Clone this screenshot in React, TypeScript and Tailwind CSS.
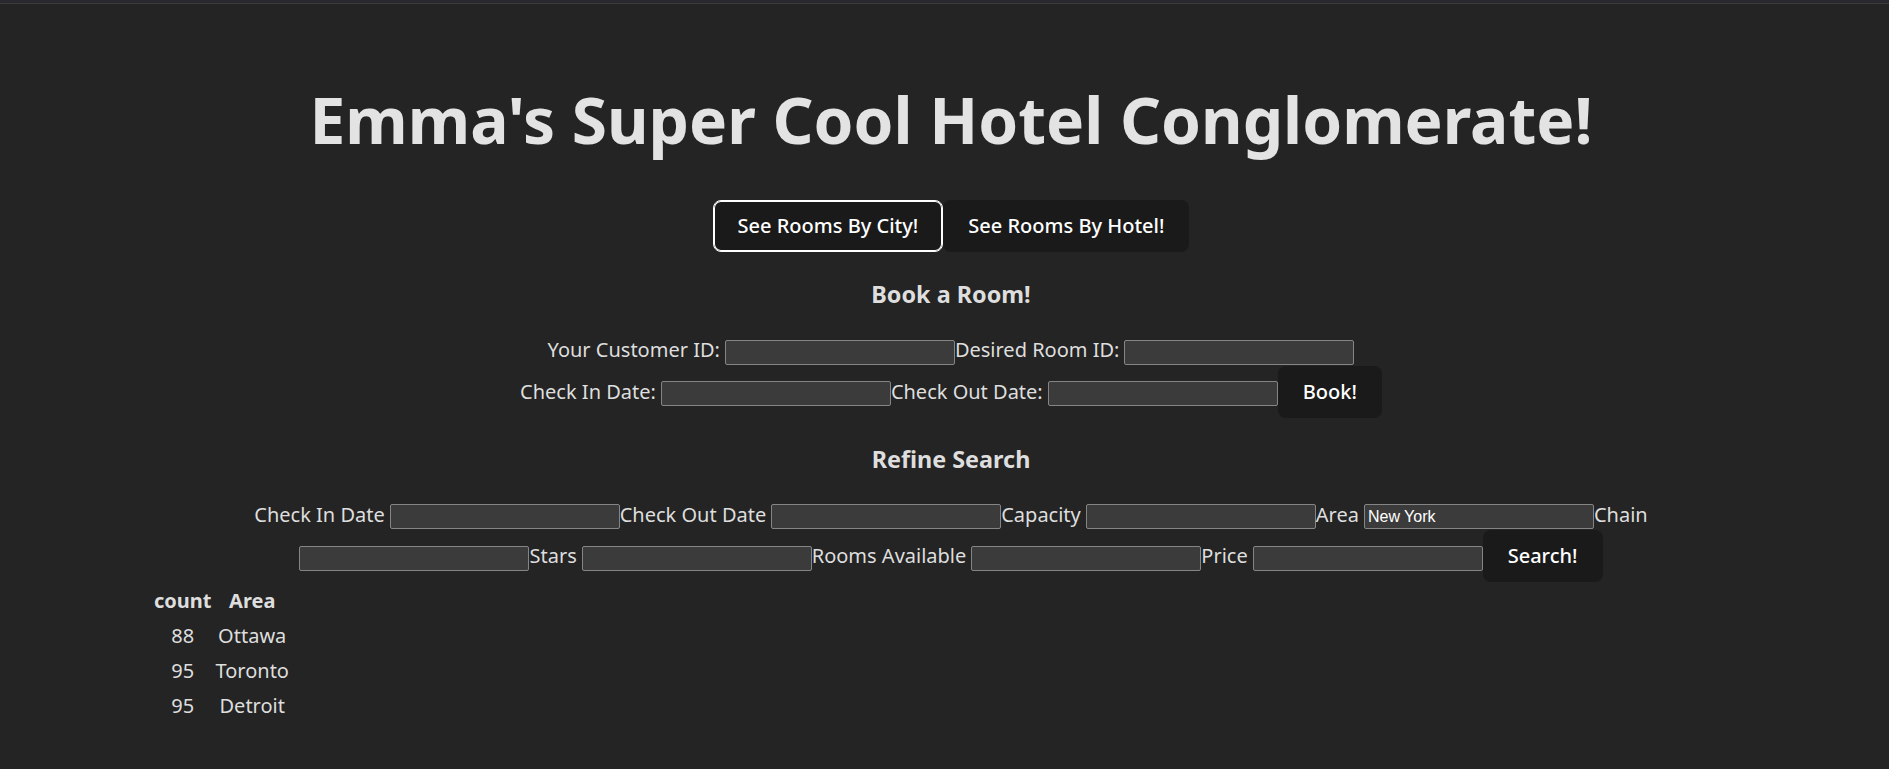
import { ReactNode } from 'react';

const inputClass = 'h-[25px] w-[230px] rounded-[2px] border border-[#858585] bg-[#3b3b3b] px-[3px] font-["Liberation_Sans",Arial,sans-serif] text-[16px] text-white outline-none';

function Field({ label, value }: { label: string; value?: string }) {
  return (
    <label className="flex items-baseline">
      <span>{label}</span>
      <input className={`ml-[5px] ${inputClass}`} defaultValue={value} />
    </label>
  );
}

function ActionButton({ children, focused }: { children: ReactNode; focused?: boolean }) {
  return (
    <button
      type="button"
      className={`rounded-lg border bg-[#1a1a1a] px-[24px] py-[10px] text-[20px] font-medium leading-[30px] text-white ${focused ? 'border-white shadow-[inset_0_0_0_1px_#fff]' : 'border-transparent'}`}
    >
      {children}
    </button>
  );
}

const rows = [
  { count: 88, area: 'Ottawa' },
  { count: 95, area: 'Toronto' },
  { count: 95, area: 'Detroit' },
];

export default function App() {
  return (
    <div className="min-h-screen bg-[#242424] font-['Noto_Sans',sans-serif] text-[20px] text-[#dedede]">
      <div className="h-[3px] bg-[#28282e]" />
      <div className="h-px bg-[#3c3c3c]" />

      <div className="pl-[13px] text-center">
        <h1 className="mt-[81px] text-[64px] font-bold leading-[70px] text-[#e3e3e3]">Emma's Super Cool Hotel Conglomerate!</h1>

        <div className="mt-[45px] flex justify-center">
          <ActionButton focused>See Rooms By City!</ActionButton>
          <ActionButton>See Rooms By Hotel!</ActionButton>
        </div>

        <h3 className="mt-[26px] text-[23.4px] font-bold leading-[32px]">Book a Room!</h3>
        <div className="mt-[27px] flex items-baseline justify-center leading-[26px]">
          <Field label="Your Customer ID:" />
          <Field label="Desired Room ID:" />
        </div>
        <div className="mt-px flex items-baseline justify-center leading-[26px]">
          <Field label="Check In Date:" />
          <Field label="Check Out Date:" />
          <ActionButton>Book!</ActionButton>
        </div>

        <h3 className="mt-[25px] text-[23.4px] font-bold leading-[32px]">Refine Search</h3>
        <div className="mt-[27px] flex items-baseline justify-center leading-[26px]">
          <Field label="Check In Date" />
          <Field label="Check Out Date" />
          <Field label="Capacity" />
          <Field label="Area" value="New York" />
          <span>Chain</span>
        </div>
        <div className="mt-px flex items-baseline justify-center leading-[26px]">
          <input className={inputClass} />
          <Field label="Stars" />
          <Field label="Rooms Available" />
          <Field label="Price" />
          <ActionButton>Search!</ActionButton>
        </div>
      </div>

      <table className="ml-[151px] border-separate border-spacing-[2px] text-center leading-[31px]">
        <thead>
          <tr>
            <th className="p-px font-bold">count</th>
            <th className="p-px font-bold">Area</th>
          </tr>
        </thead>
        <tbody>
          {rows.map((row) => (
            <tr key={row.area}>
              <td className="p-px">{row.count}</td>
              <td className="p-px">{row.area}</td>
            </tr>
          ))}
        </tbody>
      </table>
    </div>
  );
}
